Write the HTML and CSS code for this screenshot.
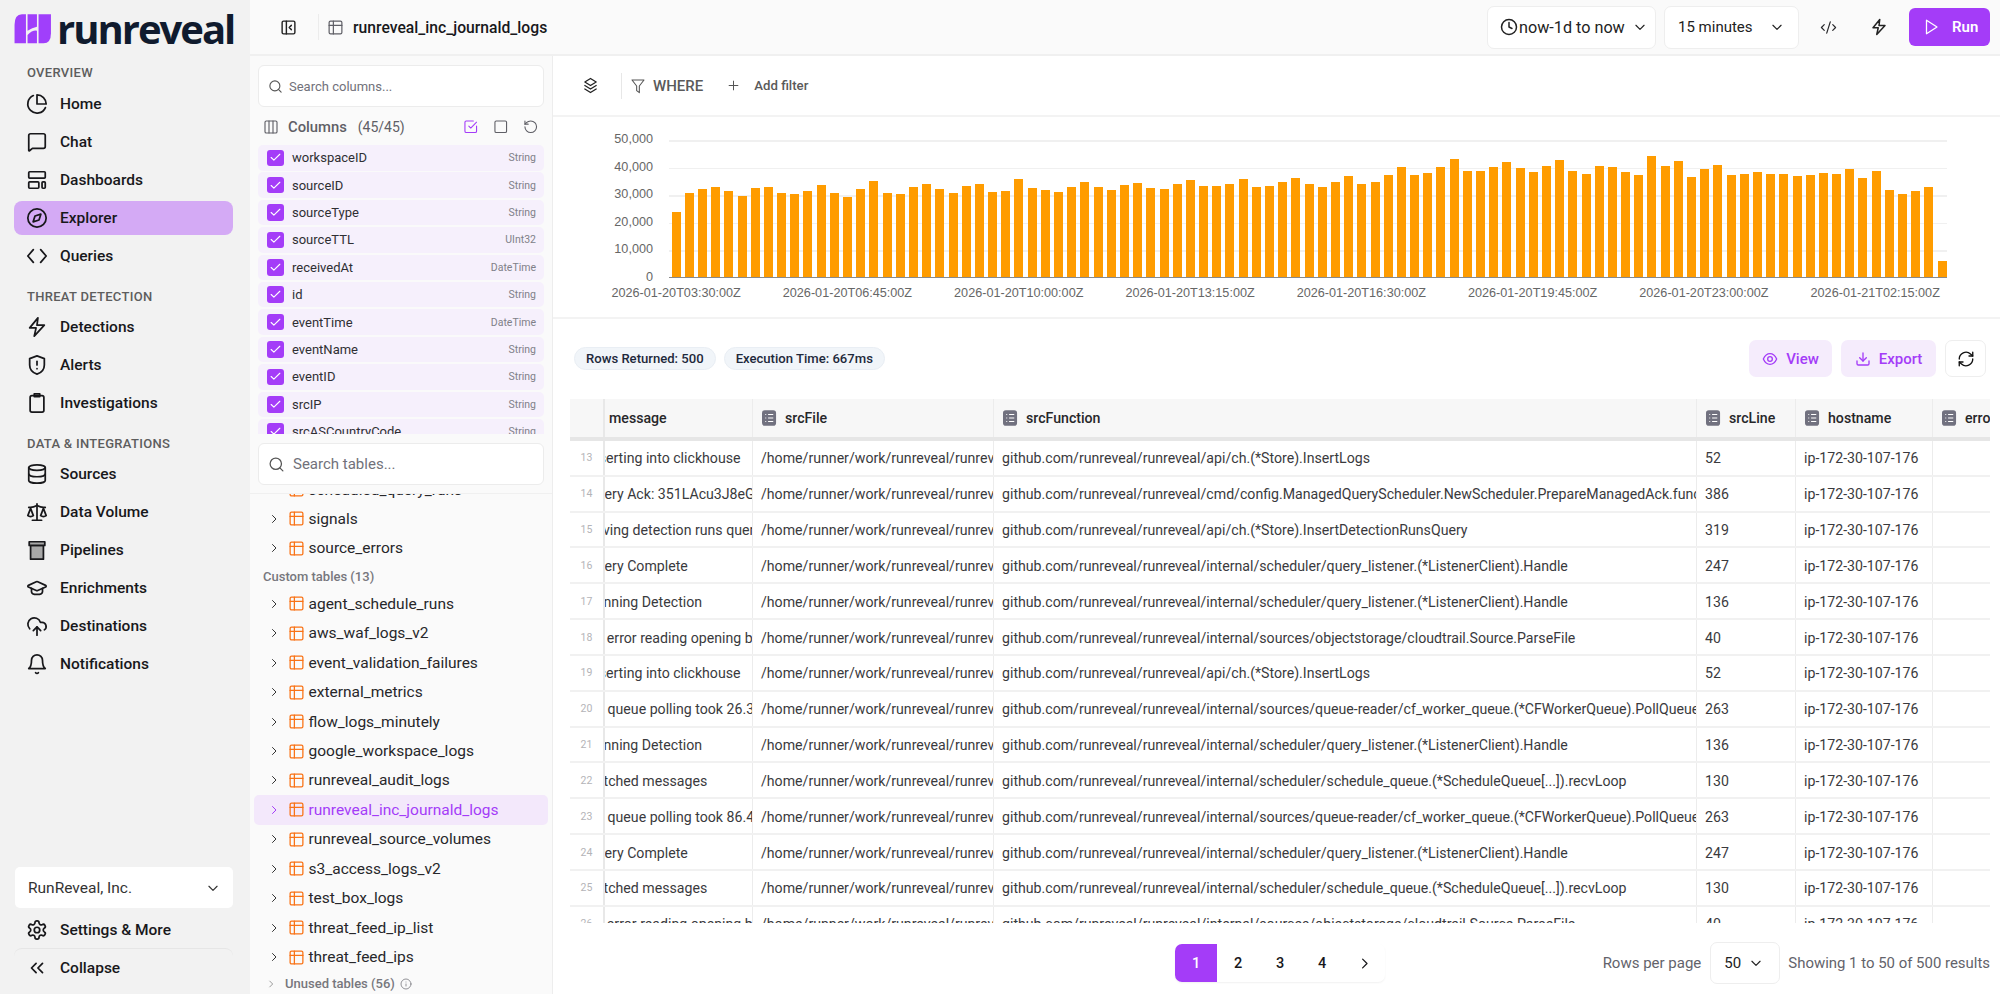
FILE: index.html
```html
<!DOCTYPE html>
<html lang="en">
<head>
<meta charset="utf-8">
<title>RunReveal Explorer</title>
<link rel="stylesheet" href="styles.css">
</head>
<body>
<svg class="sprite" xmlns="http://www.w3.org/2000/svg">
<symbol id="pie" viewBox="0 0 24 24"><path d="M21.2 15.9A10 10 0 1 1 8 2.8"/><path d="M22 12A10 10 0 0 0 12 2v10z"/></symbol>
<symbol id="chat" viewBox="0 0 24 24"><path d="M3 5a2 2 0 0 1 2-2h14a2 2 0 0 1 2 2v12a2 2 0 0 1-2 2H7l-3.2 2.6a.5.5 0 0 1-.8-.4z"/></symbol>
<symbol id="dash" viewBox="0 0 24 24"><rect x="3" y="3" width="18" height="7" rx="1"/><rect x="3" y="14" width="11" height="7" rx="1"/><rect x="17.5" y="14" width="3.5" height="7" rx="1"/></symbol>
<symbol id="compass" viewBox="0 0 24 24"><circle cx="12" cy="12" r="10"/><path d="M16.2 7.8l-2 6.4-6.4 2 2-6.4z"/></symbol>
<symbol id="code" viewBox="0 0 24 24"><path d="M8 5l-6 7 6 7"/><path d="M16 5l6 7-6 7"/></symbol>
<symbol id="bolt" viewBox="0 0 24 24"><path d="M13 2 4 13h7l-2 9 11-12h-8z"/></symbol>
<symbol id="shield" viewBox="0 0 24 24"><path d="M12 2l8 3v7c0 5-3.5 8.5-8 10-4.5-1.5-8-5-8-10V5z"/><path d="M12 8v4"/><path d="M12 16h.01"/></symbol>
<symbol id="clip" viewBox="0 0 24 24"><rect x="4.5" y="4" width="15" height="18" rx="2"/><path d="M9 2h6v3H9z"/></symbol>
<symbol id="db" viewBox="0 0 24 24"><ellipse cx="12" cy="5" rx="9" ry="3"/><path d="M3 5v14c0 1.700 4 3 9 3s9-1.300 9-3V5"/><path d="M3 12c0 1.700 4 3 9 3s9-1.300 9-3"/></symbol>
<symbol id="scale" viewBox="0 0 24 24"><path d="m16 16 3-8 3 8c-.87.650-1.920 1-3 1s-2.130-.350-3-1Z"/><path d="m2 16 3-8 3 8c-.87.650-1.920 1-3 1s-2.130-.350-3-1Z"/><path d="M7 21h10"/><path d="M12 3v18"/><path d="M3 7h2c2 0 5-1 7-2 2 1 5 2 7 2h2"/></symbol>
<symbol id="pipe" viewBox="0 0 24 24"><rect x="5" y="7" width="14" height="15" fill="#a8a8a8"/><path d="M3.500 3h17v4h-17z" fill="#a8a8a8"/></symbol>
<symbol id="cap" viewBox="0 0 24 24"><path d="M21.400 10.900a1 1 0 0 0 0-1.800L12.800 5.200a2 2 0 0 0-1.600 0L2.600 9.100a1 1 0 0 0 0 1.800l8.600 3.900a2 2 0 0 0 1.600 0z"/><path d="M6 12.500V16a6 3 0 0 0 12 0v-3.500"/></symbol>
<symbol id="cloud" viewBox="0 0 24 24"><path d="M12 13v9"/><path d="M4 15A7 7 0 1 1 15.700 8h1.800a4.500 4.500 0 0 1 2.500 8.200"/><path d="m8 17 4-4 4 4"/></symbol>
<symbol id="bell" viewBox="0 0 24 24"><path d="M6 8a6 6 0 0 1 12 0c0 7 3 9 3 9H3s3-2 3-9"/><path d="M10.500 21.500a2 2 0 0 0 3 0"/></symbol>
<symbol id="gear" viewBox="0 0 24 24"><path d="M12.220 2h-.44a2 2 0 0 0-2 2v.18a2 2 0 0 1-1 1.730l-.43.25a2 2 0 0 1-2 0l-.15-.08a2 2 0 0 0-2.730.73l-.22.38a2 2 0 0 0 .73 2.730l.15.1a2 2 0 0 1 1 1.720v.51a2 2 0 0 1-1 1.740l-.15.09a2 2 0 0 0-.73 2.730l.22.38a2 2 0 0 0 2.730.73l.15-.08a2 2 0 0 1 2 0l.43.25a2 2 0 0 1 1 1.730V20a2 2 0 0 0 2 2h.44a2 2 0 0 0 2-2v-.18a2 2 0 0 1 1-1.730l.43-.25a2 2 0 0 1 2 0l.15.08a2 2 0 0 0 2.730-.73l.22-.39a2 2 0 0 0-.73-2.730l-.15-.08a2 2 0 0 1-1-1.740v-.5a2 2 0 0 1 1-1.740l.15-.09a2 2 0 0 0 .73-2.730l-.22-.38a2 2 0 0 0-2.730-.73l-.15.08a2 2 0 0 1-2 0l-.43-.25a2 2 0 0 1-1-1.730V4a2 2 0 0 0-2-2z"/><circle cx="12" cy="12" r="3"/></symbol>
<symbol id="dbl" viewBox="0 0 24 24"><path d="m11 17-5-5 5-5"/><path d="m18 17-5-5 5-5"/></symbol>
<symbol id="search" viewBox="0 0 24 24"><circle cx="11" cy="11" r="8"/><path d="m21 21-4.300-4.300"/></symbol>
<symbol id="right" viewBox="0 0 24 24"><path d="m9 5 7 7-7 7"/></symbol>
<symbol id="down" viewBox="0 0 24 24"><path d="m5 9 7 7 7-7"/></symbol>
<symbol id="table" viewBox="0 0 24 24"><rect x="3" y="3" width="18" height="18" rx="2"/><path d="M3 9h18"/><path d="M9 3v18"/></symbol>
<symbol id="panel" viewBox="0 0 24 24"><rect x="3" y="3" width="18" height="18" rx="2"/><path d="M9 3v18"/><path d="m16 15-3-3 3-3"/></symbol>
<symbol id="cols" viewBox="0 0 24 24"><rect x="3" y="3" width="18" height="18" rx="2"/><path d="M9 3v18"/><path d="M15 3v18"/></symbol>
<symbol id="funnel" viewBox="0 0 24 24"><path d="M3 3h18l-7 9v10l-4-3v-7z"/></symbol>
<symbol id="layers" viewBox="0 0 24 24"><path d="M12 2 4 7l8 5 8-5z"/><path d="m4 12 8 5 8-5"/><path d="m4 17 8 5 8-5"/></symbol>
<symbol id="plus" viewBox="0 0 24 24"><path d="M5 12h14"/><path d="M12 5v14"/></symbol>
<symbol id="clock" viewBox="0 0 24 24"><circle cx="12" cy="12" r="10"/><path d="M12 6v6l4 2"/></symbol>
<symbol id="xml" viewBox="0 0 24 24"><path d="m18 16 4-4-4-4"/><path d="m6 8-4 4 4 4"/><path d="m14.500 4-5 16"/></symbol>
<symbol id="play" viewBox="0 0 24 24"><path d="M6 3l14 9-14 9z"/></symbol>
<symbol id="eye" viewBox="0 0 24 24"><path d="M2 12c2-4.500 5.500-8 10-8s8 3.500 10 8c-2 4.500-5.500 8-10 8s-8-3.500-10-8z"/><circle cx="12" cy="12" r="3.500"/></symbol>
<symbol id="dl" viewBox="0 0 24 24"><path d="M21 15v4a2 2 0 0 1-2 2H5a2 2 0 0 1-2-2v-4"/><path d="m7 10 5 5 5-5"/><path d="M12 15V3"/></symbol>
<symbol id="sync" viewBox="0 0 24 24"><path d="M3 12a9 9 0 0 1 15-6.700L21 8"/><path d="M21 3v5h-5"/><path d="M21 12a9 9 0 0 1-15 6.700L3 16"/><path d="M8 16H3v5"/></symbol>
<symbol id="sq" viewBox="0 0 24 24"><rect x="3" y="3" width="18" height="18" rx="2"/></symbol>
<symbol id="sqc" viewBox="0 0 24 24"><path d="M21 11v8a2 2 0 0 1-2 2H5a2 2 0 0 1-2-2V5a2 2 0 0 1 2-2h11"/><path d="m9 11 3 3 9-9"/></symbol>
<symbol id="reset" viewBox="0 0 24 24"><path d="M3 12a9 9 0 1 0 9-9 9.750 9.750 0 0 0-6.740 2.740L3 8"/><path d="M3 3v5h5"/></symbol>
<symbol id="check" viewBox="0 0 24 24"><path d="M20 6 9 17l-5-5"/></symbol>
<symbol id="info" viewBox="0 0 24 24"><circle cx="12" cy="12" r="10"/><path d="M12 16v-4"/><path d="M12 8h.01"/></symbol>
<symbol id="list" viewBox="0 0 16 17"><rect width="15" height="16.500" rx="3" class="list-bg"/><path d="M3.500 4.500h1M6.500 4.500h5.500M3.500 8.200h1M6.500 8.200h5.500M3.500 12h1M6.500 12h5.500" class="list-fg"/></symbol>
</svg>

<aside class="sidebar">
  <div class="brand">
    <svg class="logo" viewBox="4 4 37.500 30" xmlns="http://www.w3.org/2000/svg"><path d="M15.700 4.300H11.700Q4.300 4.300 4.300 15V33.300H15.700Z"/><path d="M17.300 4.300H26.700V16.700Q22 17.500 17.300 20.700Z"/><path d="M17.300 33.300H26.700V20.700Q22 20 17.300 25Z"/><path d="M28.300 4.300H40.700V23.300Q40.700 33.300 33.300 33.300H28.300Z"/></svg>
    <span class="wordmark">runreveal</span>
  </div>
  <nav class="nav">
    <div class="nav-label">OVERVIEW</div>
    <a class="nav-item"><svg class="i nav-ic"><use href="#pie"/></svg>Home</a>
    <a class="nav-item"><svg class="i nav-ic"><use href="#chat"/></svg>Chat</a>
    <a class="nav-item"><svg class="i nav-ic"><use href="#dash"/></svg>Dashboards</a>
    <a class="nav-item active"><svg class="i nav-ic"><use href="#compass"/></svg>Explorer</a>
    <a class="nav-item"><svg class="i nav-ic"><use href="#code"/></svg>Queries</a>
    <div class="nav-label spaced">THREAT DETECTION</div>
    <a class="nav-item"><svg class="i nav-ic"><use href="#bolt"/></svg>Detections</a>
    <a class="nav-item"><svg class="i nav-ic"><use href="#shield"/></svg>Alerts</a>
    <a class="nav-item"><svg class="i nav-ic"><use href="#clip"/></svg>Investigations</a>
    <div class="nav-label spaced">DATA &amp; INTEGRATIONS</div>
    <a class="nav-item"><svg class="i nav-ic"><use href="#db"/></svg>Sources</a>
    <a class="nav-item"><svg class="i nav-ic"><use href="#scale"/></svg>Data Volume</a>
    <a class="nav-item"><svg class="i nav-ic"><use href="#pipe"/></svg>Pipelines</a>
    <a class="nav-item"><svg class="i nav-ic"><use href="#cap"/></svg>Enrichments</a>
    <a class="nav-item"><svg class="i nav-ic"><use href="#cloud"/></svg>Destinations</a>
    <a class="nav-item"><svg class="i nav-ic"><use href="#bell"/></svg>Notifications</a>
  </nav>
  <div class="side-foot">
    <div class="org"><span>RunReveal, Inc.</span><svg class="i org-chev"><use href="#down"/></svg></div>
    <a class="nav-item"><svg class="i nav-ic"><use href="#gear"/></svg>Settings &amp; More</a>
    <a class="nav-item collapse"><svg class="i nav-ic"><use href="#dbl"/></svg>Collapse</a>
  </div>
</aside>

<div class="main">
  <header class="topbar">
    <svg class="i tb-toggle"><use href="#panel"/></svg>
    <span class="tb-div"></span>
    <svg class="i tb-table"><use href="#table"/></svg>
    <span class="tb-title">runreveal_inc_journald_logs</span>
    <div class="tb-right">
      <button class="sel sel-time"><svg class="i ic18"><use href="#clock"/></svg><span>now-1d to now</span><svg class="i ic12"><use href="#down"/></svg></button>
      <button class="sel sel-int"><span>15 minutes</span><svg class="i ic12"><use href="#down"/></svg></button>
      <svg class="i tb-xml"><use href="#xml"/></svg>
      <svg class="i tb-bolt"><use href="#bolt"/></svg>
      <button class="run"><svg class="i run-ic"><use href="#play"/></svg>Run</button>
    </div>
  </header>
  <div class="content">
    <section class="panel">
      <div class="cols-pane">
        <div class="search"><svg class="i search-ic"><use href="#search"/></svg><span class="search-ph small">Search columns...</span></div>
        <div class="cols-head">
          <svg class="i cols-ic"><use href="#cols"/></svg>
          <span class="cols-title">Columns</span><span class="cols-count">(45/45)</span>
          <span class="cols-actions">
            <svg class="i act purple"><use href="#sqc"/></svg>
            <svg class="i act"><use href="#sq"/></svg>
            <svg class="i act"><use href="#reset"/></svg>
          </span>
        </div>
        <div class="col-row"><span class="cb"><svg class="i cb-ic"><use href="#check"/></svg></span><span class="col-name">workspaceID</span><span class="col-type">String</span></div>
        <div class="col-row"><span class="cb"><svg class="i cb-ic"><use href="#check"/></svg></span><span class="col-name">sourceID</span><span class="col-type">String</span></div>
        <div class="col-row"><span class="cb"><svg class="i cb-ic"><use href="#check"/></svg></span><span class="col-name">sourceType</span><span class="col-type">String</span></div>
        <div class="col-row"><span class="cb"><svg class="i cb-ic"><use href="#check"/></svg></span><span class="col-name">sourceTTL</span><span class="col-type">UInt32</span></div>
        <div class="col-row"><span class="cb"><svg class="i cb-ic"><use href="#check"/></svg></span><span class="col-name">receivedAt</span><span class="col-type">DateTime</span></div>
        <div class="col-row"><span class="cb"><svg class="i cb-ic"><use href="#check"/></svg></span><span class="col-name">id</span><span class="col-type">String</span></div>
        <div class="col-row"><span class="cb"><svg class="i cb-ic"><use href="#check"/></svg></span><span class="col-name">eventTime</span><span class="col-type">DateTime</span></div>
        <div class="col-row"><span class="cb"><svg class="i cb-ic"><use href="#check"/></svg></span><span class="col-name">eventName</span><span class="col-type">String</span></div>
        <div class="col-row"><span class="cb"><svg class="i cb-ic"><use href="#check"/></svg></span><span class="col-name">eventID</span><span class="col-type">String</span></div>
        <div class="col-row"><span class="cb"><svg class="i cb-ic"><use href="#check"/></svg></span><span class="col-name">srcIP</span><span class="col-type">String</span></div>
        <div class="col-row"><span class="cb"><svg class="i cb-ic"><use href="#check"/></svg></span><span class="col-name">srcASCountryCode</span><span class="col-type">String</span></div>
      </div>
      <div class="tables-search">
        <div class="search"><svg class="i search-ic big"><use href="#search"/></svg><span class="search-ph">Search tables...</span></div>
      </div>
      <div class="tree">
        <div class="tree-inner">
          <div class="tree-row"><svg class="i chev"><use href="#right"/></svg><svg class="i tbl"><use href="#table"/></svg>scheduled_query_runs</div>
          <div class="tree-row"><svg class="i chev"><use href="#right"/></svg><svg class="i tbl"><use href="#table"/></svg>signals</div>
          <div class="tree-row"><svg class="i chev"><use href="#right"/></svg><svg class="i tbl"><use href="#table"/></svg>source_errors</div>
          <div class="tree-label">Custom tables (13)</div>
          <div class="tree-row"><svg class="i chev"><use href="#right"/></svg><svg class="i tbl"><use href="#table"/></svg>agent_schedule_runs</div>
          <div class="tree-row"><svg class="i chev"><use href="#right"/></svg><svg class="i tbl"><use href="#table"/></svg>aws_waf_logs_v2</div>
          <div class="tree-row"><svg class="i chev"><use href="#right"/></svg><svg class="i tbl"><use href="#table"/></svg>event_validation_failures</div>
          <div class="tree-row"><svg class="i chev"><use href="#right"/></svg><svg class="i tbl"><use href="#table"/></svg>external_metrics</div>
          <div class="tree-row"><svg class="i chev"><use href="#right"/></svg><svg class="i tbl"><use href="#table"/></svg>flow_logs_minutely</div>
          <div class="tree-row"><svg class="i chev"><use href="#right"/></svg><svg class="i tbl"><use href="#table"/></svg>google_workspace_logs</div>
          <div class="tree-row"><svg class="i chev"><use href="#right"/></svg><svg class="i tbl"><use href="#table"/></svg>runreveal_audit_logs</div>
          <div class="tree-row selected"><svg class="i chev"><use href="#right"/></svg><svg class="i tbl"><use href="#table"/></svg>runreveal_inc_journald_logs</div>
          <div class="tree-row"><svg class="i chev"><use href="#right"/></svg><svg class="i tbl"><use href="#table"/></svg>runreveal_source_volumes</div>
          <div class="tree-row"><svg class="i chev"><use href="#right"/></svg><svg class="i tbl"><use href="#table"/></svg>s3_access_logs_v2</div>
          <div class="tree-row"><svg class="i chev"><use href="#right"/></svg><svg class="i tbl"><use href="#table"/></svg>test_box_logs</div>
          <div class="tree-row"><svg class="i chev"><use href="#right"/></svg><svg class="i tbl"><use href="#table"/></svg>threat_feed_ip_list</div>
          <div class="tree-row"><svg class="i chev"><use href="#right"/></svg><svg class="i tbl"><use href="#table"/></svg>threat_feed_ips</div>
          <div class="tree-unused"><svg class="i chev small"><use href="#right"/></svg><span>Unused tables (56)</span><svg class="i info"><use href="#info"/></svg></div>
        </div>
      </div>
    </section>
    <section class="results">
      <div class="filters">
        <svg class="i layers"><use href="#layers"/></svg>
        <span class="f-div"></span>
        <svg class="i funnel"><use href="#funnel"/></svg>
        <span class="where">WHERE</span>
        <svg class="i plus"><use href="#plus"/></svg>
        <span class="add">Add filter</span>
      </div>
      <div class="chart">
        <div class="plot-row">
          <div class="y-axis"><span>50,000</span><span>40,000</span><span>30,000</span><span>20,000</span><span>10,000</span><span>0</span></div>
          <div class="plot">
            <i class="bar" style="height:65px"></i><i class="bar" style="height:84.300px"></i><i class="bar" style="height:87.700px"></i><i class="bar" style="height:90.300px"></i><i class="bar" style="height:86.300px"></i><i class="bar" style="height:81px"></i><i class="bar" style="height:89px"></i><i class="bar" style="height:90.300px"></i><i class="bar" style="height:84.300px"></i><i class="bar" style="height:83px"></i><i class="bar" style="height:86.300px"></i><i class="bar" style="height:92px"></i><i class="bar" style="height:83.700px"></i><i class="bar" style="height:79.700px"></i><i class="bar" style="height:87.700px"></i><i class="bar" style="height:96.300px"></i><i class="bar" style="height:84.300px"></i><i class="bar" style="height:83px"></i><i class="bar" style="height:90px"></i><i class="bar" style="height:93.300px"></i><i class="bar" style="height:88.300px"></i><i class="bar" style="height:83.700px"></i><i class="bar" style="height:91px"></i><i class="bar" style="height:93.300px"></i><i class="bar" style="height:85.300px"></i><i class="bar" style="height:86px"></i><i class="bar" style="height:98.300px"></i><i class="bar" style="height:89.300px"></i><i class="bar" style="height:87px"></i><i class="bar" style="height:84.700px"></i><i class="bar" style="height:90px"></i><i class="bar" style="height:95.300px"></i><i class="bar" style="height:89.700px"></i><i class="bar" style="height:87.300px"></i><i class="bar" style="height:92.300px"></i><i class="bar" style="height:93.700px"></i><i class="bar" style="height:89px"></i><i class="bar" style="height:88.300px"></i><i class="bar" style="height:92.700px"></i><i class="bar" style="height:96.700px"></i><i class="bar" style="height:91.300px"></i><i class="bar" style="height:91px"></i><i class="bar" style="height:93.300px"></i><i class="bar" style="height:98.300px"></i><i class="bar" style="height:90px"></i><i class="bar" style="height:91px"></i><i class="bar" style="height:95px"></i><i class="bar" style="height:99px"></i><i class="bar" style="height:92.700px"></i><i class="bar" style="height:90.300px"></i><i class="bar" style="height:95px"></i><i class="bar" style="height:100.700px"></i><i class="bar" style="height:93px"></i><i class="bar" style="height:94.700px"></i><i class="bar" style="height:102.300px"></i><i class="bar" style="height:110.300px"></i><i class="bar" style="height:102.300px"></i><i class="bar" style="height:104.300px"></i><i class="bar" style="height:109.700px"></i><i class="bar" style="height:118.300px"></i><i class="bar" style="height:106.300px"></i><i class="bar" style="height:106.300px"></i><i class="bar" style="height:110.300px"></i><i class="bar" style="height:115.300px"></i><i class="bar" style="height:109.300px"></i><i class="bar" style="height:105.300px"></i><i class="bar" style="height:111.300px"></i><i class="bar" style="height:116.700px"></i><i class="bar" style="height:105.700px"></i><i class="bar" style="height:103px"></i><i class="bar" style="height:111.300px"></i><i class="bar" style="height:110px"></i><i class="bar" style="height:105.300px"></i><i class="bar" style="height:102px"></i><i class="bar" style="height:121px"></i><i class="bar" style="height:111.300px"></i><i class="bar" style="height:115.700px"></i><i class="bar" style="height:100.300px"></i><i class="bar" style="height:108.300px"></i><i class="bar" style="height:112.300px"></i><i class="bar" style="height:102px"></i><i class="bar" style="height:103px"></i><i class="bar" style="height:105px"></i><i class="bar" style="height:102.700px"></i><i class="bar" style="height:103px"></i><i class="bar" style="height:100.700px"></i><i class="bar" style="height:102px"></i><i class="bar" style="height:103.700px"></i><i class="bar" style="height:103.300px"></i><i class="bar" style="height:108.300px"></i><i class="bar" style="height:99.300px"></i><i class="bar" style="height:106.300px"></i><i class="bar" style="height:87.300px"></i><i class="bar" style="height:83.300px"></i><i class="bar" style="height:86px"></i><i class="bar" style="height:90px"></i><i class="bar" style="height:16px"></i>
          </div>
        </div>
        <div class="x-axis"><span>2026-01-20T03:30:00Z</span><span>2026-01-20T06:45:00Z</span><span>2026-01-20T10:00:00Z</span><span>2026-01-20T13:15:00Z</span><span>2026-01-20T16:30:00Z</span><span>2026-01-20T19:45:00Z</span><span>2026-01-20T23:00:00Z</span><span>2026-01-21T02:15:00Z</span></div>
      </div>
      <div class="stats">
        <span class="pill">Rows Returned: 500</span>
        <span class="pill">Execution Time: 667ms</span>
        <span class="stats-actions">
          <button class="soft soft-view"><svg class="i ic16"><use href="#eye"/></svg>View</button>
          <button class="soft soft-export"><svg class="i ic16"><use href="#dl"/></svg>Export</button>
          <button class="refresh"><svg class="i ic18 sync"><use href="#sync"/></svg></button>
        </span>
      </div>
      <div class="grid">
        <div class="g-row g-head">
          <div class="g-n"></div>
          <div class="g-c msg"><span class="m-text head">message</span></div>
          <div class="g-c"><svg class="li"><use href="#list"/></svg>srcFile</div>
          <div class="g-c"><svg class="li"><use href="#list"/></svg>srcFunction</div>
          <div class="g-c"><svg class="li"><use href="#list"/></svg>srcLine</div>
          <div class="g-c"><svg class="li"><use href="#list"/></svg>hostname</div>
          <div class="g-c"><svg class="li"><use href="#list"/></svg>error</div>
        </div>
        <div class="g-body">
          <div class="g-row"><div class="g-n">13</div><div class="g-c msg"><span class="m-text">Inserting into clickhouse</span></div><div class="g-c">/home/runner/work/runreveal/runreveal/api/ch/logs.go</div><div class="g-c">github.com/runreveal/runreveal/api/ch.(*Store).InsertLogs</div><div class="g-c">52</div><div class="g-c">ip-172-30-107-176</div><div class="g-c"></div></div>
          <div class="g-row"><div class="g-n">14</div><div class="g-c msg"><span class="m-text">Query Ack: 351LAcu3J8eGkwq</span></div><div class="g-c">/home/runner/work/runreveal/runreveal/cmd/config/config.go</div><div class="g-c">github.com/runreveal/runreveal/cmd/config.ManagedQueryScheduler.NewScheduler.PrepareManagedAck.func1</div><div class="g-c">386</div><div class="g-c">ip-172-30-107-176</div><div class="g-c"></div></div>
          <div class="g-row"><div class="g-n">15</div><div class="g-c msg"><span class="m-text">Saving detection runs query</span></div><div class="g-c">/home/runner/work/runreveal/runreveal/api/ch/runs.go</div><div class="g-c">github.com/runreveal/runreveal/api/ch.(*Store).InsertDetectionRunsQuery</div><div class="g-c">319</div><div class="g-c">ip-172-30-107-176</div><div class="g-c"></div></div>
          <div class="g-row"><div class="g-n">16</div><div class="g-c msg"><span class="m-text">Query Complete</span></div><div class="g-c">/home/runner/work/runreveal/runreveal/internal/scheduler</div><div class="g-c">github.com/runreveal/runreveal/internal/scheduler/query_listener.(*ListenerClient).Handle</div><div class="g-c">247</div><div class="g-c">ip-172-30-107-176</div><div class="g-c"></div></div>
          <div class="g-row"><div class="g-n">17</div><div class="g-c msg"><span class="m-text">Running Detection</span></div><div class="g-c">/home/runner/work/runreveal/runreveal/internal/scheduler</div><div class="g-c">github.com/runreveal/runreveal/internal/scheduler/query_listener.(*ListenerClient).Handle</div><div class="g-c">136</div><div class="g-c">ip-172-30-107-176</div><div class="g-c"></div></div>
          <div class="g-row"><div class="g-n">18</div><div class="g-c msg"><span class="m-text">S3 error reading opening bucket</span></div><div class="g-c">/home/runner/work/runreveal/runreveal/internal/sources</div><div class="g-c">github.com/runreveal/runreveal/internal/sources/objectstorage/cloudtrail.Source.ParseFile</div><div class="g-c">40</div><div class="g-c">ip-172-30-107-176</div><div class="g-c"></div></div>
          <div class="g-row"><div class="g-n">19</div><div class="g-c msg"><span class="m-text">Inserting into clickhouse</span></div><div class="g-c">/home/runner/work/runreveal/runreveal/api/ch/logs.go</div><div class="g-c">github.com/runreveal/runreveal/api/ch.(*Store).InsertLogs</div><div class="g-c">52</div><div class="g-c">ip-172-30-107-176</div><div class="g-c"></div></div>
          <div class="g-row"><div class="g-n">20</div><div class="g-c msg"><span class="m-text">CF queue polling took 26.3s</span></div><div class="g-c">/home/runner/work/runreveal/runreveal/internal/sources</div><div class="g-c">github.com/runreveal/runreveal/internal/sources/queue-reader/cf_worker_queue.(*CFWorkerQueue).PollQueue</div><div class="g-c">263</div><div class="g-c">ip-172-30-107-176</div><div class="g-c"></div></div>
          <div class="g-row"><div class="g-n">21</div><div class="g-c msg"><span class="m-text">Running Detection</span></div><div class="g-c">/home/runner/work/runreveal/runreveal/internal/scheduler</div><div class="g-c">github.com/runreveal/runreveal/internal/scheduler/query_listener.(*ListenerClient).Handle</div><div class="g-c">136</div><div class="g-c">ip-172-30-107-176</div><div class="g-c"></div></div>
          <div class="g-row"><div class="g-n">22</div><div class="g-c msg"><span class="m-text">Batched messages</span></div><div class="g-c">/home/runner/work/runreveal/runreveal/internal/scheduler</div><div class="g-c">github.com/runreveal/runreveal/internal/scheduler/schedule_queue.(*ScheduleQueue[...]).recvLoop</div><div class="g-c">130</div><div class="g-c">ip-172-30-107-176</div><div class="g-c"></div></div>
          <div class="g-row"><div class="g-n">23</div><div class="g-c msg"><span class="m-text">CF queue polling took 86.4s</span></div><div class="g-c">/home/runner/work/runreveal/runreveal/internal/sources</div><div class="g-c">github.com/runreveal/runreveal/internal/sources/queue-reader/cf_worker_queue.(*CFWorkerQueue).PollQueue</div><div class="g-c">263</div><div class="g-c">ip-172-30-107-176</div><div class="g-c"></div></div>
          <div class="g-row"><div class="g-n">24</div><div class="g-c msg"><span class="m-text">Query Complete</span></div><div class="g-c">/home/runner/work/runreveal/runreveal/internal/scheduler</div><div class="g-c">github.com/runreveal/runreveal/internal/scheduler/query_listener.(*ListenerClient).Handle</div><div class="g-c">247</div><div class="g-c">ip-172-30-107-176</div><div class="g-c"></div></div>
          <div class="g-row"><div class="g-n">25</div><div class="g-c msg"><span class="m-text">Batched messages</span></div><div class="g-c">/home/runner/work/runreveal/runreveal/internal/scheduler</div><div class="g-c">github.com/runreveal/runreveal/internal/scheduler/schedule_queue.(*ScheduleQueue[...]).recvLoop</div><div class="g-c">130</div><div class="g-c">ip-172-30-107-176</div><div class="g-c"></div></div>
          <div class="g-row"><div class="g-n">26</div><div class="g-c msg"><span class="m-text">S3 error reading opening bucket</span></div><div class="g-c">/home/runner/work/runreveal/runreveal/internal/sources</div><div class="g-c">github.com/runreveal/runreveal/internal/sources/objectstorage/cloudtrail.Source.ParseFile</div><div class="g-c">40</div><div class="g-c">ip-172-30-107-176</div><div class="g-c"></div></div>
        </div>
      </div>
      <div class="pager">
        <div class="pages">
          <span class="pg current">1</span><span class="pg">2</span><span class="pg">3</span><span class="pg">4</span><span class="pg"><svg class="i ic14"><use href="#right"/></svg></span>
        </div>
        <div class="pager-right">
          <span class="rpp">Rows per page</span>
          <span class="rpp-sel">50<svg class="i ic12"><use href="#down"/></svg></span>
          <span class="showing">Showing 1 to 50 of 500 results</span>
        </div>
      </div>
    </section>
  </div>
</div>
</body>
</html>
```

FILE: styles.css
```css
* { box-sizing: border-box; }
html, body { margin: 0; height: 100%; }
body {
  display: flex;
  height: 994px;
  overflow: hidden;
  font-family: Roboto, "Noto Sans", sans-serif;
  color: #27272a;
  background: #fff;
}
button { font: inherit; color: inherit; }
.sprite { position: absolute; width: 0; height: 0; }
.i { fill: none; stroke: currentColor; stroke-width: 2; stroke-linecap: round; stroke-linejoin: round; flex: none; display: block; }
.ic12 { width: 14px; height: 14px; }
.ic14 { width: 15px; height: 15px; }
.ic16 { width: 16px; height: 16px; }
.ic18 { width: 18px; height: 18px; }

/* sidebar */
.sidebar { width: 250px; flex: none; background: #f2f2f2; display: flex; flex-direction: column; }
.brand { height: 62px; padding: 14px 0 0 14px; display: flex; align-items: flex-start; gap: 5px; }
.logo { width: 38px; height: 30px; fill: #a03ffb; display: block; }
.wordmark { font-family: "Open Sans", sans-serif; font-weight: 700; font-size: 40px; line-height: 30px; color: #101b2e; letter-spacing: -2px; }
.nav { flex: 1; }
.nav-label { height: 22px; line-height: 22px; padding-left: 27px; font-size: 13px; font-weight: 500; color: #5d5d5d; letter-spacing: .3px; }
.nav-label:first-child { height: 23px; }
.nav-label.spaced { margin-top: 11px; }
.nav-item { height: 38px; margin: 0 17px 0 14px; padding-left: 12px; display: flex; align-items: center; gap: 12px; font-size: 15.5px; font-weight: 500; color: #18181b; border-radius: 8px; }
.nav-ic { width: 22px; height: 22px; stroke-width: 1.9; }
.nav-item.active { background: #d4aaf5; height: 34px; margin-top: 2px; margin-bottom: 2px; }
.side-foot { padding-bottom: 8px; }
.org { height: 41px; margin: 0 17px 3px 15px; background: #fff; border-radius: 5px; display: flex; align-items: center; padding: 0 13px; justify-content: space-between; font-size: 15.500px; color: #333; }
.org-chev { width: 14px; height: 14px; }
.collapse { border-top: 1px solid #e6e6e6; margin-top: -1px; }

/* topbar */
.main { flex: 1; min-width: 0; display: flex; flex-direction: column; }
.topbar { height: 56px; flex: none; background: #fafafa; border-bottom: 2px solid #f0f0f0; display: flex; align-items: center; }
.tb-toggle { width: 17px; height: 17px; margin-left: 30px; color: #222; }
.tb-div { width: 1px; height: 26px; background: #ececec; margin-left: 21px; }
.tb-table { width: 17px; height: 17px; margin-left: 8px; stroke-width: 1.7; color: #5f5f66; }
.tb-title { margin-left: 9px; font-size: 15.700px; font-weight: 500; color: #18181b; }
.tb-right { margin-left: auto; display: flex; align-items: center; padding-right: 10px; }
.sel { height: 43px; background: #fff; border: 1px solid #eeeeee; border-radius: 7px; display: flex; align-items: center; font-size: 15px; padding: 0; color: #222; }
.sel-time { width: 169px; padding-left: 12px; gap: 1px; margin-right: 8px; font-size: 16.200px; }
.sel-time .ic12 { margin-left: 7px; }
.sel-int { width: 135px; padding: 0 14px 0 13px; justify-content: space-between; }
.tb-xml { width: 17px; height: 17px; margin-left: 21px; stroke-width: 1.700; }
.tb-bolt { width: 18px; height: 18px; margin-left: 33px; color: #222; }
.run { width: 81px; height: 38px; margin-left: 21px; border: 0; border-radius: 6px; background: #a43cf8; color: #fff; font-size: 15px; font-weight: 600; display: flex; align-items: center; padding-left: 13px; gap: 12px; }
.run-ic { width: 18px; height: 18px; stroke-width: 1.700; }

/* layout under the bar */
.content { flex: 1; min-height: 0; display: flex; }
.panel { width: 303px; flex: none; background: #fafafa; border-right: 1px solid #ededed; display: flex; flex-direction: column; }
.cols-pane { height: 378px; padding: 9px 8px 0; overflow: hidden; flex: none; }
.search { height: 42px; background: #fff; border: 1px solid #ececec; border-radius: 6px; display: flex; align-items: center; padding-left: 9px; gap: 8px; }
.search-ic { width: 15px; height: 15px; color: #555; stroke-width: 1.800; }
.search-ic.big { width: 17px; height: 17px; }
.search-ph { font-size: 15px; color: #71717a; }
.search-ph.small { font-size: 13px; margin-left: -2px; }
.cols-head { height: 38px; padding-top: 1px; display: flex; align-items: center; padding-left: 5px; color: #5f5f66; }
.cols-ic { width: 16px; height: 16px; stroke-width: 1.700; }
.cols-title { margin-left: 9px; font-size: 14.800px; font-weight: 500; }
.cols-count { margin-left: 11px; font-size: 14px; }
.cols-actions { margin-left: auto; display: flex; align-items: center; gap: 14.500px; padding-right: 6px; }
.act { width: 15.500px; height: 15.500px; stroke-width: 1.700; }
.act.purple { color: #a43cf8; }
.col-row { height: 25.500px; margin-bottom: 1.900px; background: #f6f0fc; border-radius: 5px; display: flex; align-items: center; padding: 0 8px 0 9px; }
.cb { width: 17px; height: 16.500px; background: #a43cf8; border-radius: 3px; display: flex; align-items: center; justify-content: center; color: #fff; }
.cb-ic { width: 13px; height: 13px; }
.col-name { margin-left: 8px; font-size: 13px; color: #2f2f33; }
.col-type { margin-left: auto; font-size: 10.500px; color: #808088; }
.tables-search { height: 60px; flex: none; padding: 9px 8px 0; background: #fafafa; border-bottom: 1px solid #f0f0f0; }
.tree { flex: 1; min-height: 0; overflow: hidden; }
.tree-inner { margin-top: -19.200px; }
.tree-row { height: 29.450px; margin: 0 4px; padding-left: 14px; display: flex; align-items: center; font-size: 15.500px; color: #27272a; border-radius: 5px; }
.chev { width: 12px; height: 12px; color: #333; }
.tbl { width: 17px; height: 17px; margin-left: 8px; margin-right: 3.500px; color: #f97316; stroke-width: 1.800; }
.tree-row.selected { background: #f3e8fb; color: #a43cf8; }
.tree-row.selected .chev { color: #a43cf8; }
.tree-label { height: 26px; padding-left: 13px; display: flex; align-items: center; font-size: 13px; font-weight: 500; color: #77777d; }
.tree-unused { height: 24px; padding-left: 16px; display: flex; align-items: center; font-size: 13px; font-weight: 500; color: #77777d; }
.chev.small { width: 10px; height: 10px; color: #888; margin-right: 9px; }
.info { width: 12px; height: 12px; margin-left: 5px; stroke-width: 1.600; }

/* results */
.results { flex: 1; min-width: 0; display: flex; flex-direction: column; }
.filters { height: 61px; flex: none; border-bottom: 2px solid #f3f3f3; display: flex; align-items: center; }
.layers { width: 17px; height: 17px; margin-left: 29px; color: #222; stroke-width: 1.800; }
.f-div { width: 1px; height: 26px; background: #e7e7e7; margin-left: 22px; }
.funnel { width: 16px; height: 16px; margin-left: 8px; color: #555; stroke-width: 1.600; }
.where { margin-left: 7px; font-size: 15px; font-weight: 500; color: #5a5a5a; }
.plus { width: 15px; height: 15px; margin-left: 23px; color: #555; stroke-width: 1.600; }
.add { margin-left: 13px; font-size: 13.200px; font-weight: 500; color: #5a5a5a; }

.chart { height: 202px; flex: none; padding-top: 23px; border-bottom: 2px solid #f3f3f3; font-family: "Liberation Sans", Arial, sans-serif; font-size: 12.650px; color: #666; }
.plot-row { display: flex; height: 138px; }
.y-axis { width: 108px; padding-right: 8px; margin-top: -13.750px; display: flex; flex-direction: column; text-align: right; }
.y-axis span { height: 27.500px; line-height: 27.500px; flex: none; }
.plot { width: 1278px; margin-left: 8px; height: 138px; display: flex; align-items: flex-end; gap: 4.190px; padding-left: 2.600px; border-bottom: 1.500px solid #8a8a8a; background: repeating-linear-gradient(to bottom, #f0f0f0 0, #f0f0f0 1.500px, transparent 1.500px, transparent 27.500px); }
.bar { display: block; width: 9px; flex: none; background: #ff9c00; }
.x-axis { display: flex; padding-left: 37.500px; margin-top: 6.500px; }
.x-axis span { width: 171.300px; flex: none; text-align: center; line-height: 16px; }

.stats { height: 80px; flex: none; display: flex; align-items: flex-start; padding: 21px 14px 0 21px; gap: 8px; }
.pill { height: 23px; margin-top: 7px; padding: 0 11px; display: flex; align-items: center; background: #f1f5f9; border: 1px solid #e9eef4; border-radius: 12px; font-size: 13.100px; font-weight: 500; color: #1e293b; }
.stats-actions { margin-left: auto; display: flex; gap: 9px; }
.soft { height: 37px; border: 0; border-radius: 7px; background: #f5ecfc; color: #a43cf8; font-size: 15px; font-weight: 500; display: flex; align-items: center; justify-content: center; gap: 8px; padding: 0; }
.soft-view { width: 83px; }
.soft-export { width: 95px; }
.refresh { width: 41px; height: 37px; background: #fff; border: 1px solid #eeeeee; border-radius: 7px; display: flex; align-items: center; justify-content: center; padding: 0; color: #111; }
.sync { stroke-width: 1.800; }

.grid { margin: 0 10px 0 17px; flex: none; }
.g-row { display: grid; grid-template-columns: 35px 148px 241px 703px 99px 137px 57px; height: 35.830px; border-bottom: 2px solid #f1f1f1; font-size: 14.150px; color: #3a3a3d; }
.g-head { height: 42px; background: #f7f7f7; border-bottom: 4px solid #e6e6e6; font-weight: 500; color: #27272a; }
.g-body { height: 482px; overflow: hidden; }
.g-n { font-size: 10.500px; color: #b4b4b8; display: flex; align-items: center; justify-content: center; border-right: 2px solid #e8e8e8; }
.g-c { overflow: hidden; white-space: nowrap; display: flex; align-items: center; padding-left: 8px; padding-top: 1px; border-right: 1px solid #ececec; }
.g-head .g-c { padding-top: 0; }
.g-c:last-child { border-right: 0; }
.msg { padding-left: 0; }
.m-text { margin-left: -18px; flex: none; }
.m-text.head { margin-left: 4px; }
.li { width: 15px; height: 16.500px; flex: none; margin-right: 8px; margin-left: 1px; }
.list-bg { fill: #71717f; }
.list-fg { stroke: #fff; stroke-width: 1.200; fill: none; }

.pager { flex: 1; min-height: 0; display: flex; align-items: flex-start; padding: 19px 10px 0 0; }
.pages { margin: 2px 0 0 622px; display: flex; height: 38px; border-radius: 7px; box-shadow: 0 1px 2px rgba(0,0,0,.06); }
.pg { width: 42px; display: flex; align-items: center; justify-content: center; font-size: 14.500px; font-weight: 500; color: #18181b; }
.pg.current { background: #a43cf8; color: #fff; border-radius: 7px 0 0 7px; }
.pager-right { margin-left: auto; display: flex; align-items: center; height: 42px; font-size: 15px; color: #63636b; }
.showing { font-size: 14.950px; }
.rpp-sel { width: 70px; height: 42px; margin: 0 8px 0 9px; background: #fff; border: 1px solid #eeeeee; border-radius: 7px; display: flex; align-items: center; padding-left: 13px; gap: 8px; font-size: 15px; color: #222; }
```
